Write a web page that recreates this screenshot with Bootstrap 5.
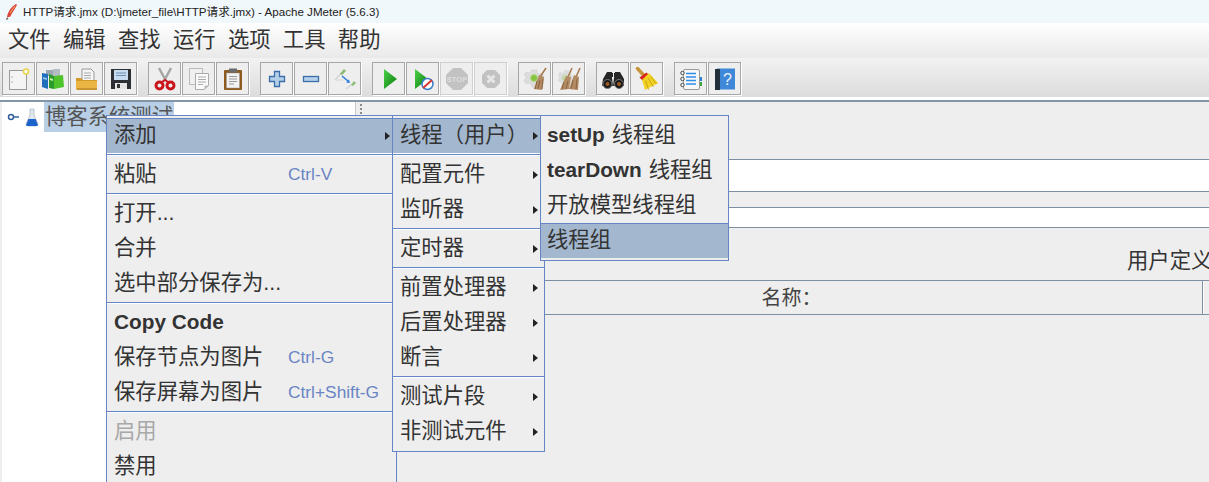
<!DOCTYPE html>
<html lang="zh">
<head>
<meta charset="utf-8">
<title>HTTP请求.jmx - Apache JMeter (5.6.3)</title>
<link href="https://cdn.jsdelivr.net/npm/bootstrap@5.3.0/dist/css/bootstrap.min.css" rel="stylesheet">
<style>
html,body{height:482px;overflow:hidden;}
body{background:#eee;font-family:"Liberation Sans","Noto Sans CJK SC",sans-serif;color:#333;position:relative;}
.titlebar{height:23px;background:#f1f8fb;font:11.600px/23px "Liberation Sans","Noto Sans CJK SC",sans-serif;color:#222;padding-left:5px;gap:5px;}
.menubar{height:35px;background:linear-gradient(#fff,#e9e9e9);padding-left:8px;gap:12.300px;font-size:21.330px;line-height:34px;color:#333;}
.toolstrip{height:42px;background:linear-gradient(#f2f2f2,#dcdcdc);padding:4px 0 0 2px;gap:0;border-bottom:3px solid #fff;}
.tbtn{width:33px;height:33px;margin-right:1px;border:1px solid #a6a6a6;box-shadow:1px 1px 0 #fff;background:#eee;display:flex;align-items:center;justify-content:center;padding:0;}
.tbtn svg{width:24px;height:24px;display:block;}
.tbtn.off{border-color:#cfcfcf;}
.tgap{margin-left:10px;}
.mainsplit{height:382px;border-top:2px solid #8496a6;}
.treepane{width:353px;margin-left:2px;background:#fff;flex:none;}
.treenode{height:30px;gap:4px;padding-left:5px;}
.nodelabel{background:#b8cfe6;width:130px;height:30px;font-size:21.330px;line-height:30px;padding-left:1px;color:#555;white-space:nowrap;overflow:hidden;}
.splitter{width:11px;flex:none;background:#eee;border-left:1px solid #c8c8c8;display:flex;flex-direction:column;align-items:center;padding-top:2px;gap:2px;}
.splitter i{width:2px;height:2px;background:#8a8a8a;display:block;}
.detail{flex:1;min-width:0;padding-left:31px;background:#eee;}
.fieldbox{background:#fff;border-top:1px solid #7d8fa0;border-bottom:1px solid #7d8fa0;}
.fname{height:33px;margin-top:57px;}
.fnote{height:21px;margin-top:15px;}
.deflabel{height:52px;font-size:21.330px;line-height:66px;color:#333;padding-left:730px;white-space:nowrap;overflow:hidden;}
.thead-row{height:35px;border-top:1px solid #7d8fa0;border-bottom:1px solid #7d8fa0;}
.thcell{width:806px;flex:none;border-right:1px solid #7d8fa0;box-shadow:1px 0 0 #fff;text-align:center;font-size:20px;line-height:34px;color:#444;padding-right:16px;}
.popup{position:absolute;background:#eee;border:1px solid #6685c4;padding:2px 0;z-index:5;}
.pop1{left:106px;top:115px;width:291px;height:380px;z-index:5;}
.pop2{left:392px;top:115px;width:153px;z-index:6;}
.pop3{left:540px;top:115px;width:189px;z-index:7;padding-bottom:1px;}
.mi{height:35px;line-height:34px;font-size:21.330px;color:#333;padding-left:7px;white-space:nowrap;position:relative;}
.pop3 .mi{padding-left:6px;}
.mi.hot{background:#a3b8cf;box-shadow:inset 0 1px 0 #6685c4;}
.pop3 .mi.last{margin-bottom:1px;}
.mi b{font-size:20.800px;font-weight:700;color:#333;}
.mi em{font-style:normal;margin-left:1px;}
.mi.off{color:#a8a8a8;}
.keytip{font-size:17.330px;color:#6a85c4;position:absolute;left:181px;top:0;}
.mi u{position:absolute;right:6px;top:14px;width:0;height:0;border-left:5px solid #222;border-top:4px solid transparent;border-bottom:4px solid transparent;}
.msep{height:4px;border-top:1px solid #eee;background:linear-gradient(#6685c4 1px,#fff 1px,#fff 2px,#eee 2px);}
.sep-first{border-top-color:#fff;}
</style>
</head>
<body>
<div class="titlebar d-flex align-items-center">
  <svg width="13" height="16" viewBox="0 0 13 16"><path d="M11 0C7 2 3 7 2 13L5 13C7 9 10 5 12 1Z" fill="#d9483b"/><path d="M2 13L1 16 3.500 15Z" fill="#555"/><path d="M10 2L5 9" stroke="#f6b26b"/></svg>
  <span>HTTP请求.jmx (D:\jmeter_file\HTTP请求.jmx) - Apache JMeter (5.6.3)</span>
</div>
<div class="menubar d-flex">
  <span>文件</span><span>编辑</span><span>查找</span><span>运行</span><span>选项</span><span>工具</span><span>帮助</span>
</div>
<div class="toolstrip d-flex">
  <button class="tbtn"><svg viewBox="0 0 24 24"><rect x="2.500" y="3.500" width="17" height="19" fill="#f4f4f4" stroke="#9a9a9a"/><circle cx="5" cy="10" r=".7" fill="#999"/><circle cx="5" cy="15" r=".7" fill="#999"/><circle cx="19" cy="4.500" r="2.500" fill="#fff" stroke="#e8d24a" stroke-width="1.500"/></svg></button>
  <button class="tbtn"><svg viewBox="0 0 24 24"><path d="M5 3h8v6H5z" fill="#9aa7b0"/><path d="M12 2h7v7h-7z" fill="#b4bdc4"/><path d="M1 6l6 1v15l-6-2z" fill="#1f6fbd"/><path d="M2 10l4 1v2l-4-1z" fill="#8ec1ea"/><path d="M8 7l5 2v13l-5-1z" fill="#2a9a2a"/><path d="M13 9l9-1 1 12-10 2z" fill="#4fc32c"/><path d="M9 11l3 1v2l-3-1z" fill="#cdeeb0"/></svg></button>
  <button class="tbtn"><svg viewBox="0 0 24 24"><path d="M7 2h9l3 3v9H7z" fill="#f5f5f5" stroke="#999"/><path d="M9 6h7M9 8.500h7M9 11h7" stroke="#aaa"/><path d="M1 11h5l2 2h14v8q0 2-2 2H3q-2 0-2-2z" fill="#d39a2a"/><path d="M1 14h21v7q0 2-2 2H3q-2 0-2-2z" fill="#eab543"/><path d="M2 22h20" stroke="#a87518"/></svg></button>
  <button class="tbtn"><svg viewBox="0 0 24 24"><path d="M2 2h20v20H2z" fill="#2c2f33"/><rect x="5" y="3" width="14" height="10" fill="#c8dcef"/><path d="M7 6h10M7 8.500h10" stroke="#6e8fb0"/><rect x="6" y="16" width="12" height="6" fill="#e4e4e4"/><rect x="8" y="17" width="3" height="4" fill="#333"/></svg></button>
  <button class="tbtn tgap"><svg viewBox="0 0 24 24"><path d="M6 1l7 13M18 1l-7 13" stroke="#a5a5a5" stroke-width="2.500" fill="none"/><circle cx="6.500" cy="18.500" r="3.500" fill="none" stroke="#c9161d" stroke-width="3"/><circle cx="17.500" cy="18.500" r="3.500" fill="none" stroke="#c9161d" stroke-width="3"/><path d="M9 15l3-2 3 2" stroke="#c9161d" stroke-width="2" fill="none"/></svg></button>
  <button class="tbtn"><svg viewBox="0 0 24 24"><rect x="2.500" y="1.500" width="13" height="16" fill="#f0f0f0" stroke="#bbb"/><path d="M8.500 6.500h13v12l-4 4h-9z" fill="#fafafa" stroke="#aaa"/><path d="M11 10h8M11 12.500h8M11 15h8M11 17.500h5" stroke="#aaa"/><path d="M17.500 18.500h4l-4 4z" fill="#bbb"/></svg></button>
  <button class="tbtn"><svg viewBox="0 0 24 24"><rect x="3" y="3" width="18" height="20" rx="1" fill="#8f5a1e"/><rect x="5.500" y="6" width="13" height="15" fill="#f2f2f2" stroke="#999" stroke-width=".5"/><rect x="8" y="1.500" width="8" height="4" fill="#6b6b6b"/><path d="M8 9.500h8M8 12h8M8 14.500h8M8 17h5" stroke="#999"/></svg></button>
  <button class="tbtn tgap"><svg viewBox="0 0 24 24"><path d="M9.500 4.500h5v5h5v5h-5v5h-5v-5h-5v-5h5z" fill="#b6cfe9" stroke="#3a6ea8" stroke-width="1.300"/></svg></button>
  <button class="tbtn"><svg viewBox="0 0 24 24"><rect x="4.500" y="9.500" width="15" height="5" fill="#b6cfe9" stroke="#3a6ea8" stroke-width="1.300"/></svg></button>
  <button class="tbtn"><svg viewBox="0 0 24 24"><path d="M2 13L9 5" stroke="#d4d4d4" stroke-width="1.500"/><path d="M7 7l4-5 2 2-4 4z" fill="#86b86a"/><path d="M3 13h7" stroke="#d4d4d4"/><path d="M9 9l6 5" stroke="#2b7de0" stroke-width="1.600"/><path d="M17 16l-4-.5 3-3z" fill="#2b7de0"/><path d="M13 22l6-5" stroke="#dcdcdc" stroke-width="2"/><path d="M18 18l3-4 2 2-3 3z" fill="#8fbe7a"/></svg></button>
  <button class="tbtn tgap"><svg viewBox="0 0 24 24"><defs><linearGradient id="g1" x1="0" y1="0" x2="1" y2="1"><stop offset="0" stop-color="#4cd24c"/><stop offset="1" stop-color="#0a7a0a"/></linearGradient></defs><path d="M7 2l13 10L7 22z" fill="url(#g1)"/></svg></button>
  <button class="tbtn"><svg viewBox="0 0 24 24"><path d="M4 2l13 10L4 22z" fill="url(#g1)"/><circle cx="16.500" cy="17" r="5.500" fill="#fff" stroke="#3a7bc8" stroke-width="1.500"/><path d="M12 21l9-8" stroke="#d8322a" stroke-width="1.800"/></svg></button>
  <button class="tbtn off"><svg viewBox="0 0 24 24"><path d="M8 1h8l7 7v8l-7 7H8l-7-7V8z" fill="#c2c2c2"/><text x="12" y="15" text-anchor="middle" font-family="Liberation Sans" font-weight="700" font-size="7.500" fill="#dedede">STOP</text></svg></button>
  <button class="tbtn off"><svg viewBox="0 0 24 24"><path d="M8 3h8l5 5v8l-5 5H8l-5-5V8z" fill="#c2c2c2"/><path d="M8.500 8.500l7 7M15.500 8.500l-7 7" stroke="#e6e6e6" stroke-width="3"/></svg></button>
  <button class="tbtn tgap"><svg viewBox="0 0 24 24"><path d="M9 3h5v3l3 1 2-1 2 4-2 2v2l2 2-2 3-3-1-2 2h-5l-1-3-3-1-2 1-2-4 2-2v-2L1 8l2-3 3 1z" fill="#dcdcdc" stroke="#c8c8c8" stroke-width=".5"/><circle cx="11" cy="11" r="3.500" fill="#86c63f" stroke="#b5d68e"/><path d="M23 1L17 10" stroke="#a5784a" stroke-width="1.500"/><path d="M16 8l5 2-2 13-8-1z" fill="#b28a63"/><path d="M14 14l-2 8M17 13l-2 9M20 12l-1 10" stroke="#8a6540"/></svg></button>
  <button class="tbtn"><svg viewBox="0 0 24 24"><path d="M7 3h5v3l3 1 1 4v2l1 2-2 3-3-1-2 2H6l-1-3-3-1-1-1 1-3v-2L1 8l2-3 3 1z" fill="#dcdcdc"/><circle cx="8" cy="11" r="3.200" fill="#c5d9a8"/><path d="M15 1l-4 9M23 1l-4 9" stroke="#a5784a" stroke-width="1.500"/><path d="M9 9l5 1-2 12-9 1z" fill="#b28a63"/><path d="M17 8l5 2-1 13-9-1z" fill="#b28a63"/><path d="M7 15l-2 7M11 14l-2 8M16 13l-2 9M20 12l-1 10" stroke="#8a6540"/></svg></button>
  <button class="tbtn tgap"><svg viewBox="0 0 24 24"><rect x="8" y="6" width="4" height="4" fill="#222"/><rect x="13" y="6" width="4" height="4" fill="#222"/><path d="M6 5h5v6l1 8H1l1-7z" fill="#262626"/><path d="M14 5h5l4 7 0 7H12l1-8z" fill="#262626"/><circle cx="6.500" cy="17" r="4.500" fill="#1a1a1a" stroke="#777"/><circle cx="18" cy="17" r="4.500" fill="#1a1a1a" stroke="#777"/><circle cx="6.500" cy="17" r="2" fill="#9c5a22"/><circle cx="18" cy="17" r="2" fill="#9c5a22"/></svg></button>
  <button class="tbtn"><svg viewBox="0 0 24 24"><path d="M2.500 1.500l5.500 6" stroke="#c8963a" stroke-width="3.500" stroke-linecap="round"/><path d="M4.500 10.500l7-5 3 3-6 6z" fill="#d8261c"/><path d="M7 13l7-7 9 10-13 7z" fill="#f2d324"/><path d="M10.500 13.500l3 9M13 11l5.500 9M15.500 9.500l6 7.500" stroke="#c7a512"/></svg></button>
  <button class="tbtn tgap"><svg viewBox="0 0 24 24"><rect x="4.500" y="2.500" width="16" height="20" rx="1.500" fill="#f7f7f7" stroke="#999"/><circle cx="3.500" cy="6" r="1.700" fill="#fff" stroke="#444"/><circle cx="3.500" cy="12" r="1.700" fill="#fff" stroke="#444"/><circle cx="3.500" cy="18" r="1.700" fill="#fff" stroke="#444"/><path d="M7 6.500h10M7 10h10M7 13.500h10M7 17h10" stroke="#2f8fe8" stroke-width="1.500"/><rect x="21" y="10" width="2" height="4" fill="#2a7dd0"/><rect x="21" y="15" width="2" height="4" fill="#3aa53a"/></svg></button>
  <button class="tbtn"><svg viewBox="0 0 24 24"><rect x="4" y="1.500" width="18" height="21" fill="#3f87d8"/><rect x="2" y="2" width="5" height="21" fill="#222e3a"/><text x="14.500" y="18" text-anchor="middle" font-family="Liberation Sans" font-size="16" fill="#e8f1fb">?</text></svg></button>
</div>
<div class="mainsplit d-flex">
  <div class="treepane">
    <div class="treenode d-flex">
      <svg width="13" height="30" viewBox="0 0 13 30"><circle cx="4" cy="15" r="2.500" fill="#fff" stroke="#33609c" stroke-width="1.500"/><path d="M7 15h5" stroke="#33609c" stroke-width="1.500"/></svg>
      <svg width="16" height="30" viewBox="0 0 16 30"><path d="M6 7h4v6l4 9q0 2-2 2H4q-2 0-2-2l4-9z" fill="#dfe7ee" stroke="#aab4bd" stroke-width=".7"/><path d="M4.500 17h7l2.500 6q0 1-2 1H4q-2 0-2-1z" fill="#1c63cc"/></svg>
      <div class="nodelabel">博客系统测试</div>
    </div>
  </div>
  <div class="splitter"><i></i><i></i><i></i><i></i></div>
  <div class="detail">
    <div class="fieldbox fname"></div>
    <div class="fieldbox fnote"></div>
    <div class="deflabel">用户定义</div>
    <div class="thead-row d-flex"><div class="thcell">名称：</div></div>
  </div>
</div>

<div class="popup pop1">
  <div class="mi hot">添加<u></u></div>
  <div class="msep sep-first"></div>
  <div class="mi">粘贴<span class="keytip">Ctrl-V</span></div>
  <div class="msep"></div>
  <div class="mi">打开...</div>
  <div class="mi">合并</div>
  <div class="mi">选中部分保存为...</div>
  <div class="msep"></div>
  <div class="mi"><b>Copy Code</b></div>
  <div class="mi">保存节点为图片<span class="keytip">Ctrl-G</span></div>
  <div class="mi">保存屏幕为图片<span class="keytip">Ctrl+Shift-G</span></div>
  <div class="msep"></div>
  <div class="mi off">启用</div>
  <div class="mi">禁用</div>
</div>
<div class="popup pop2">
  <div class="mi hot">线程（用户）<u></u></div>
  <div class="msep sep-first"></div>
  <div class="mi">配置元件<u></u></div>
  <div class="mi">监听器<u></u></div>
  <div class="msep"></div>
  <div class="mi">定时器<u></u></div>
  <div class="msep"></div>
  <div class="mi">前置处理器<u></u></div>
  <div class="mi">后置处理器<u></u></div>
  <div class="mi">断言<u></u></div>
  <div class="msep"></div>
  <div class="mi">测试片段<u></u></div>
  <div class="mi">非测试元件<u></u></div>
</div>
<div class="popup pop3">
  <div class="mi"><b>setUp</b> <em>线程组</em></div>
  <div class="mi"><b>tearDown</b> <em>线程组</em></div>
  <div class="mi">开放模型线程组</div>
  <div class="mi hot last">线程组</div>
</div>
<script src="https://cdn.jsdelivr.net/npm/bootstrap@5.3.0/dist/js/bootstrap.bundle.min.js"></script>
</body>
</html>
